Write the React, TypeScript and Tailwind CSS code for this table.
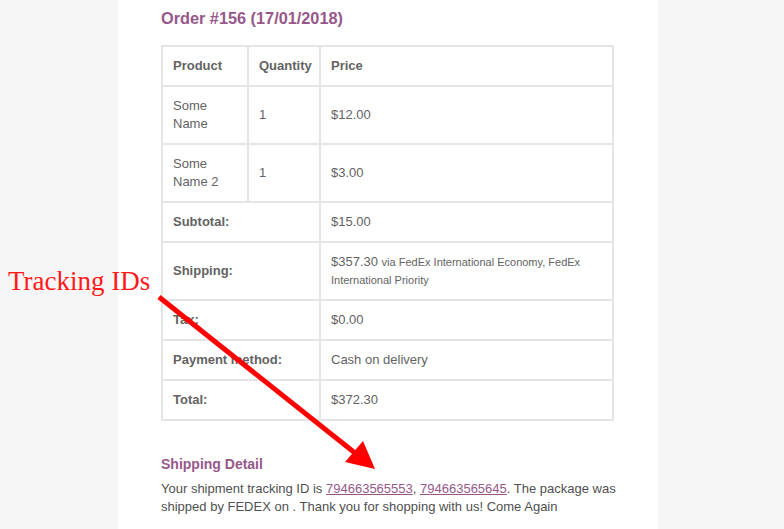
const ITEMS = [
  { name: "Some Name", qty: 1, price: "$12.00" },
  { name: "Some Name 2", qty: 1, price: "$3.00" },
];

const cell = "border border-[#e5e5e5] px-[10px] py-[10px] text-left align-middle";

export default function App() {
  return (
    <div className="relative flex h-[529px] w-[784px] overflow-hidden bg-[#f6f6f6] pl-[118px] font-['Liberation_Sans',Arial,sans-serif] text-[13px] leading-[18px] text-[#636363]">
      <div className="w-[540px] bg-white pl-[43px] pt-[8px]">
        <h2 className="mb-[17px] text-[16.3px] font-bold leading-[20px] text-[#96588a]">
          Order #156 (17/01/2018)
        </h2>

        <table className="w-[453px] table-fixed border-separate border-spacing-0 border border-[#e5e5e5]">
          <colgroup>
            <col className="w-[86px]" />
            <col className="w-[72px]" />
            <col className="w-[293px]" />
          </colgroup>
          <thead>
            <tr>
              <th className={`${cell} font-bold`}>Product</th>
              <th className={`${cell} font-bold`}>Quantity</th>
              <th className={`${cell} font-bold`}>Price</th>
            </tr>
          </thead>
          <tbody>
            {ITEMS.map((item) => (
              <tr key={item.name}>
                <td className={cell}>{item.name}</td>
                <td className={cell}>{item.qty}</td>
                <td className={cell}>{item.price}</td>
              </tr>
            ))}
          </tbody>
          <tfoot>
            <tr>
              <th colSpan={2} className={`${cell} font-bold`}>Subtotal:</th>
              <td className={cell}>$15.00</td>
            </tr>
            <tr>
              <th colSpan={2} className={`${cell} font-bold`}>Shipping:</th>
              <td className={cell}>
                $357.30 <small className="text-[11px] leading-none">via FedEx International Economy, FedEx International Priority</small>
              </td>
            </tr>
            <tr>
              <th colSpan={2} className={`${cell} font-bold`}>Tax:</th>
              <td className={cell}>$0.00</td>
            </tr>
            <tr>
              <th colSpan={2} className={`${cell} font-bold`}>Payment method:</th>
              <td className={cell}>Cash on delivery</td>
            </tr>
            <tr>
              <th colSpan={2} className={`${cell} font-bold`}>Total:</th>
              <td className={cell}>$372.30</td>
            </tr>
          </tfoot>
        </table>

        <h3 className="mt-[34px] text-[14px] font-bold leading-[18px] text-[#96588a]">Shipping Detail</h3>
        <p className="mt-[7px] w-[462px] text-[#505050]">
          Your shipment tracking ID is{" "}
          <a href="#" className="text-[#96588a] underline">794663565553</a>,{" "}
          <a href="#" className="text-[#96588a] underline">794663565645</a>. The package was shipped by FEDEX on . Thank you for
          shopping with us! Come Again
        </p>
      </div>

      {/* annotation overlay */}
      <span className="absolute left-[8px] top-[268px] font-['Liberation_Serif','Times_New_Roman',serif] text-[27px] leading-[26px] text-[#ff1a1a]">
        Tracking IDs
      </span>
      <svg className="pointer-events-none absolute left-0 top-0" width="784" height="529" viewBox="0 0 784 529">
        <line x1="159" y1="297" x2="355" y2="453" stroke="#ff0000" strokeWidth="5" />
        <polygon points="375,469 345,462 363,441" fill="#ff0000" />
      </svg>
    </div>
  );
}
